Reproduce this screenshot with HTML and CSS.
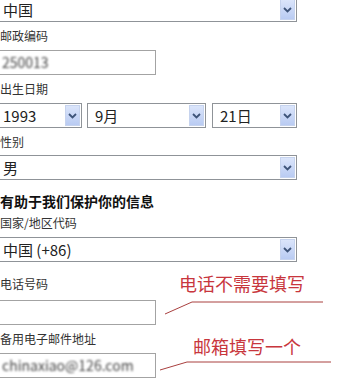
FILE: index.html
```html
<!DOCTYPE html>
<html lang="zh-CN">
<head>
    <meta charset="UTF-8">
    <meta name="viewport" content="width=device-width, initial-scale=1.0">
    <title>注册信息</title>
    <link rel="stylesheet" href="styles.css">
</head>
<body>
    <div class="form">
        <div class="select full first">
            <span>中国</span>
            <span class="arrow"><svg width="9" height="6" viewBox="0 0 9 6"><path d="M1 1 L4.5 4.5 L8 1" fill="none" stroke="#3e5479" stroke-width="1.8"/></svg></span>
        </div>

        <div class="label">邮政编码</div>
        <div class="input"><span class="blur">250013</span></div>

        <div class="label">出生日期</div>
        <div class="row">
            <div class="select year">
                <span>1993</span>
                <span class="arrow"><svg width="9" height="6" viewBox="0 0 9 6"><path d="M1 1 L4.5 4.5 L8 1" fill="none" stroke="#3e5479" stroke-width="1.8"/></svg></span>
            </div>
            <div class="select month">
                <span>9月</span>
                <span class="arrow"><svg width="9" height="6" viewBox="0 0 9 6"><path d="M1 1 L4.5 4.5 L8 1" fill="none" stroke="#3e5479" stroke-width="1.8"/></svg></span>
            </div>
            <div class="select day">
                <span>21日</span>
                <span class="arrow"><svg width="9" height="6" viewBox="0 0 9 6"><path d="M1 1 L4.5 4.5 L8 1" fill="none" stroke="#3e5479" stroke-width="1.8"/></svg></span>
            </div>
        </div>

        <div class="label short">性别</div>
        <div class="select full">
            <span>男</span>
            <span class="arrow"><svg width="9" height="6" viewBox="0 0 9 6"><path d="M1 1 L4.5 4.5 L8 1" fill="none" stroke="#3e5479" stroke-width="1.8"/></svg></span>
        </div>

        <h3>有助于我们保护你的信息</h3>
        <div class="label after-title">国家/地区代码</div>
        <div class="select full">
            <span>中国 (+86)</span>
            <span class="arrow"><svg width="9" height="6" viewBox="0 0 9 6"><path d="M1 1 L4.5 4.5 L8 1" fill="none" stroke="#3e5479" stroke-width="1.8"/></svg></span>
        </div>

        <div class="label tall">电话号码</div>
        <div class="input"></div>

        <div class="label">备用电子邮件地址</div>
        <div class="input"><span class="blur">chinaxiao@126.com</span></div>
    </div>

    <!-- hand-drawn notes over the form -->
    <svg class="marks" width="343" height="390" viewBox="0 0 343 390">
        <path d="M165 314 L192 302 L323 302" fill="none" stroke="#a9403f" stroke-width="1"/>
        <path d="M160 370 L187 362 L331 362" fill="none" stroke="#a9403f" stroke-width="1"/>
    </svg>
    <div class="note note-phone">电话不需要填写</div>
    <div class="note note-mail">邮箱填写一个</div>
</body>
</html>
```

FILE: styles.css
```css
* {
    margin: 0;
    padding: 0;
    box-sizing: border-box;
}

body {
    width: 343px;
    height: 390px;
    overflow: hidden;
    position: relative;
    background: #fff;
    font-family: 'Noto Sans CJK SC', 'Noto Sans', sans-serif;
    color: #222;
}

.form {
    margin-left: -5px;
}

.label {
    height: 28px;
    line-height: 28px;
    padding-left: 5px;
    font-size: 12px;
    color: #333;
}

.label.short {
    height: 27px;
    line-height: 27px;
}

.label.after-title {
    height: 25px;
    line-height: 21px;
}

.label.tall {
    height: 38px;
    line-height: 18px;
    padding-top: 13px;
}

h3 {
    height: 32px;
    padding: 12px 0 0 5px;
    line-height: 18px;
    font-size: 14px;
    font-weight: bold;
    color: #111;
}

.select {
    height: 25px;
    border: 1px solid #8f9398;
    display: flex;
    align-items: center;
    justify-content: space-between;
    padding: 1px 1px 1px 7px;
    font-size: 15px;
    background: #fff;
}

.select.first {
    margin-top: -3px;
}

.select.full {
    width: 302px;
}

.arrow {
    width: 15px;
    height: 21px;
    display: flex;
    align-items: center;
    justify-content: center;
    background: linear-gradient(#dbe5fb, #b9cbf2);
    border: 1px solid #c6d3ee;
}

.row {
    display: flex;
}

.select.year {
    width: 87px;
}

.select.month {
    width: 119px;
    margin-left: 5px;
}

.select.day {
    width: 85px;
    margin-left: 6px;
}

.input {
    width: 161px;
    height: 25px;
    border: 1px solid #a3a3a3;
    padding-left: 6px;
    line-height: 23px;
    font-size: 14px;
}

.blur {
    color: #444;
    filter: blur(0.8px);
}

.marks {
    position: absolute;
    left: 0;
    top: 0;
}

.note {
    position: absolute;
    font-size: 18px;
    line-height: 18px;
    color: #c8363d;
    white-space: nowrap;
}

.note-phone {
    left: 179px;
    top: 274px;
}

.note-mail {
    left: 193px;
    top: 337px;
}
```
